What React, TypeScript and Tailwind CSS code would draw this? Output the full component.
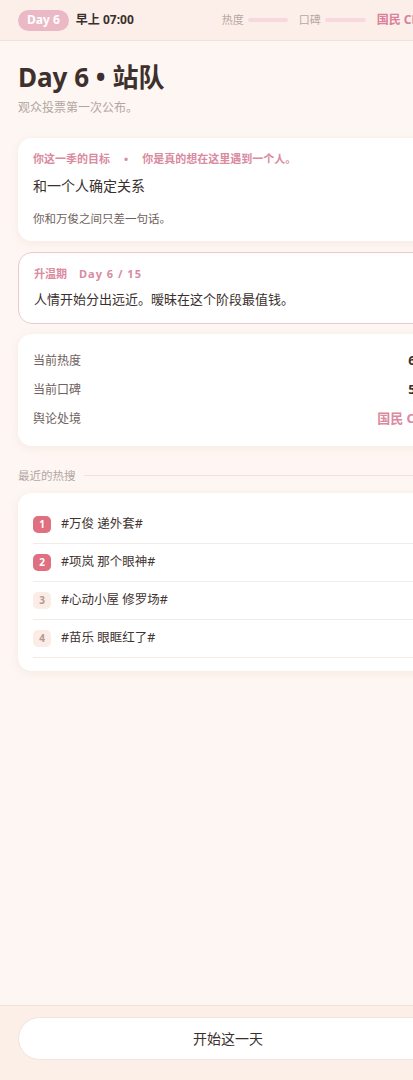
const trends = [
  { rank: 1, text: "#万俊 递外套#", hot: true },
  { rank: 2, text: "#项岚 那个眼神#", hot: true },
  { rank: 3, text: "#心动小屋 修罗场#", hot: false },
  { rank: 4, text: "#苗乐 眼眶红了#", hot: false },
];

const stats = [
  { label: "当前热度", value: "62", pink: false },
  { label: "当前口碑", value: "58", pink: false },
  { label: "舆论处境", value: "国民 CP", pink: true },
];

export default function App() {
  return (
    <div
      className="w-[456px] h-[1080px] flex flex-col bg-[#fdf6f2] text-[#3f3431] overflow-hidden"
      style={{ fontFamily: '"Noto Sans", "Noto Sans CJK SC", sans-serif' }}
    >
      {/* Top status bar */}
      <header className="h-[41px] shrink-0 flex items-center gap-[7px] px-[18px] bg-[#fcefea] border-b border-[#f3e2dc]">
        <span className="h-[21px] px-[9px] rounded-full bg-[#ebb9c6] text-white text-[12px] font-bold flex items-center">
          Day 6
        </span>
        <span className="text-[12px] font-bold text-[#3a2f2c]">早上 07:00</span>
        <div className="ml-auto mr-[19px] flex items-center gap-[11px] text-[11px] text-[#b7a7a2]">
          <div className="flex items-center gap-[4px]">
            <span>热度</span>
            <span className="w-[40px] h-[4px] rounded-full bg-[#f6d8de]" />
          </div>
          <div className="flex items-center gap-[4px]">
            <span>口碑</span>
            <span className="w-[41px] h-[4px] rounded-full bg-[#f6d8de]" />
          </div>
          <span className="text-[#d9809a] font-bold text-[12px]">国民 CP</span>
        </div>
      </header>

      <main className="flex-1 px-[18px] pt-[19px]">
        <h1 className="text-[26px] font-bold leading-[34px] text-[#3d302d]">Day 6 • 站队</h1>
        <p className="mt-[5px] text-[12px] text-[#b3a6a2]">观众投票第一次公布。</p>

        {/* Goal card */}
        <section className="mt-[21px] bg-white rounded-[14px] shadow-[0_2px_10px_rgba(200,150,140,0.12)] px-[15px] pt-[13px] pb-[14px]">
          <div className="text-[11px] font-bold text-[#d98aa0] flex gap-[14px]">
            <span>你这一季的目标</span>
            <span>•</span>
            <span>你是真的想在这里遇到一个人。</span>
          </div>
          <div className="mt-[7px] text-[14px] text-[#3a2f2c]">和一个人确定关系</div>
          <div className="mt-[14px] text-[11.5px] text-[#6f625e]">你和万俊之间只差一句话。</div>
        </section>

        {/* Phase card */}
        <section className="mt-[11px] bg-white rounded-[14px] border border-[#ecc9cf] px-[15px] pt-[13px] pb-[13px]">
          <div className="text-[11px] font-bold text-[#d98aa0] flex gap-[12px]">
            <span>升温期</span>
            <span className="tracking-[1px]">Day 6 / 15</span>
          </div>
          <div className="mt-[8px] text-[13px] text-[#3a2f2c]">人情开始分出远近。暧昧在这个阶段最值钱。</div>
        </section>

        {/* Stats card */}
        <section className="mt-[10px] bg-white rounded-[14px] shadow-[0_2px_10px_rgba(200,150,140,0.12)] px-[15px] py-[17px] flex flex-col gap-[9px]">
          {stats.map((s) => (
            <div key={s.label} className="flex items-center justify-between h-[20px] text-[12px]">
              <span className="text-[#6f625e]">{s.label}</span>
              <span className={s.pink ? "text-[13px] font-bold text-[#d98aa0]" : "text-[13px] font-bold text-[#3a2f2c]"}>
                {s.value}
              </span>
            </div>
          ))}
        </section>

        {/* Trending */}
        <div className="mt-[21px] flex items-center gap-[8px]">
          <span className="text-[11.5px] text-[#b3a6a2]">最近的热搜</span>
          <span className="flex-1 h-px bg-[#f0e2dc]" />
        </div>

        <section className="mt-[9px] bg-white rounded-[14px] shadow-[0_2px_10px_rgba(200,150,140,0.12)] px-[15px] pt-[13px] pb-[13px]">
          {trends.map((t) => (
            <div key={t.rank} className="h-[38px] flex items-center gap-[10px] border-b border-[#f3ebe8]">
              <span
                className={
                  t.hot
                    ? "w-[18px] h-[17px] rounded-[5px] bg-[#e0707f] text-white text-[10px] font-bold flex items-center justify-center"
                    : "w-[18px] h-[17px] rounded-[5px] bg-[#fbece6] text-[#b29a92] text-[10px] font-bold flex items-center justify-center"
                }
              >
                {t.rank}
              </span>
              <span className="text-[12.5px] text-[#3f3431]">{t.text}</span>
            </div>
          ))}
        </section>
      </main>

      {/* Bottom action */}
      <footer className="h-[75px] shrink-0 bg-[#fcefe8] border-t border-[#f3e2dc] px-[18px] pt-[11px]">
        <button className="w-full h-[43px] rounded-full bg-white border border-[#f1e3de] text-[14px] text-[#3a2f2c]">
          开始这一天
        </button>
      </footer>
    </div>
  );
}
